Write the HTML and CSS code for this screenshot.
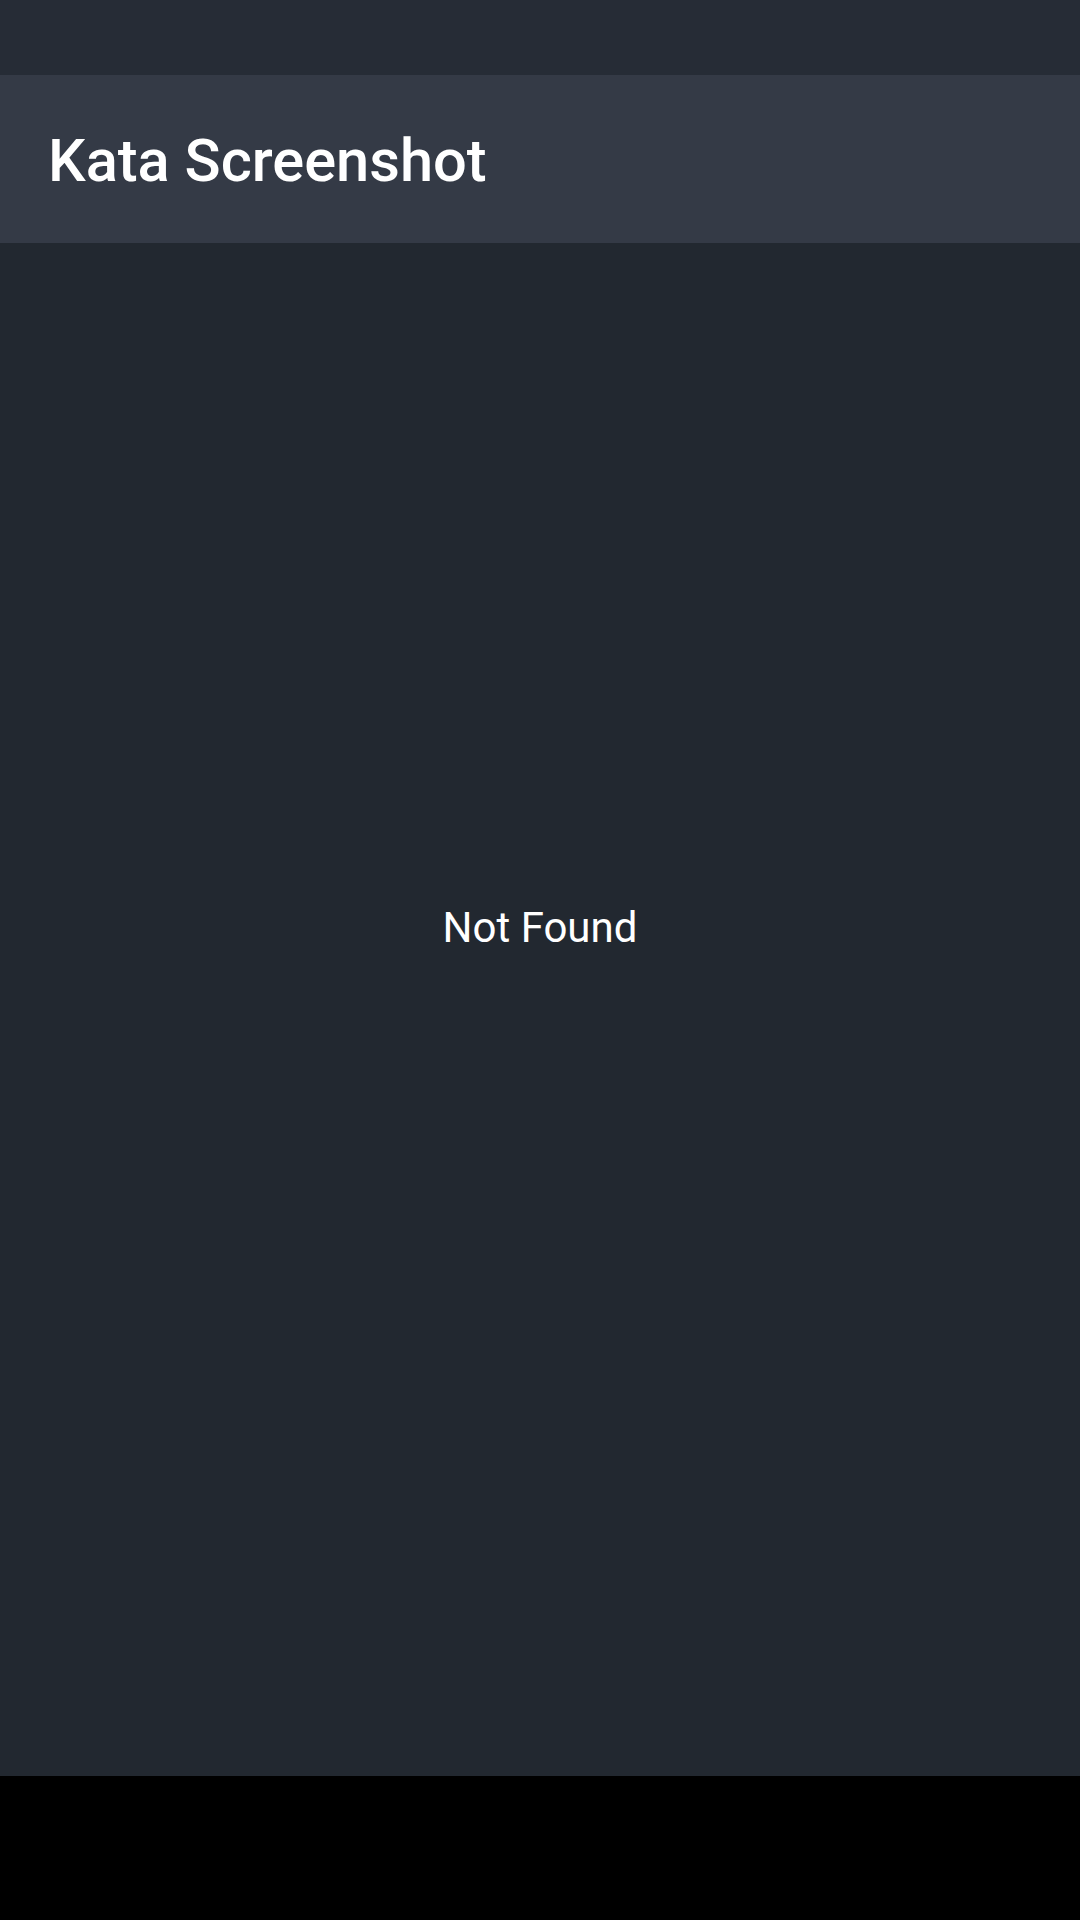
FILE: index.html
```html
<!DOCTYPE html>
<html lang="en">
<head>
<meta charset="utf-8">
<title>Kata Screenshot</title>
<link rel="stylesheet" href="styles.css">
</head>
<body>
<div class="screen">
  <div class="status-bar"></div>
  <div class="app">
    <header class="app-header">
      <h1 class="app-title">Kata Screenshot</h1>
    </header>
    <main class="app-main">
      <p class="not-found">Not Found</p>
    </main>
  </div>
  <div class="nav-bar"></div>
</div>
</body>
</html>
```

FILE: styles.css
```css
* { box-sizing: border-box; }
html, body {
  margin: 0;
  padding: 0;
  width: 1080px;
  height: 1920px;
  background: #000;
  font-family: Roboto, "Noto Sans", sans-serif;
}
.screen {
  display: flex;
  flex-direction: column;
  width: 1080px;
  height: 1920px;
}
.status-bar {
  height: 75px;
  background: #262c36;
}
.app {
  flex: 1;
  display: flex;
  flex-direction: column;
  background: #222830;
}
.app-header {
  height: 168px;
  background: #343a46;
  display: flex;
  align-items: center;
  padding: 6px 48px 0;
}
.app-title {
  margin: 0;
  color: #fff;
  font-size: 59.6px;
  font-weight: 500;
  line-height: 1;
}
.app-main {
  flex: 1;
  display: flex;
  align-items: center;
  justify-content: center;
  padding-bottom: 164px;
}
.not-found {
  margin: 0;
  color: #fff;
  font-size: 42px;
  font-weight: 400;
}
.nav-bar {
  height: 144px;
  background: #000;
}
```
